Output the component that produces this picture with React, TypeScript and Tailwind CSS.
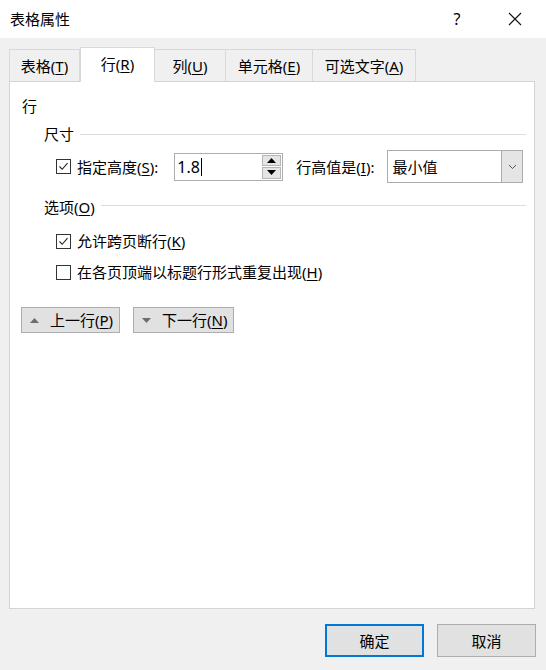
import React from "react";

const U = ({ c }: { c: string }) => <span className="underline underline-offset-2">{c}</span>;

const Check = ({ checked }: { checked: boolean }) => (
  <div className="w-[15px] h-[15px] border border-[#333333] bg-white flex items-center justify-center shrink-0">
    {checked && (
      <svg width="11" height="11" viewBox="0 0 11 11">
        <path d="M1.5 5.5 L4.2 8.3 L9.5 2.2" fill="none" stroke="#222" strokeWidth="1.1" />
      </svg>
    )}
  </div>
);

const Tri = ({ up, color = "#000" }: { up: boolean; color?: string }) => (
  <svg width="9" height="5" viewBox="0 0 9 5">
    {up ? <path d="M0 5 L4.5 0 L9 5 Z" fill={color} /> : <path d="M0 0 L4.5 5 L9 0 Z" fill={color} />}
  </svg>
);

export default function App() {
  return (
    <div className="w-[546px] h-[670px] flex flex-col bg-[#f0f0f0] text-[15px] leading-[20px] text-black font-['Noto_Sans','Noto_Sans_CJK_SC',sans-serif] overflow-hidden">
      {/* title bar */}
      <div className="h-[38px] bg-white flex items-center shrink-0">
        <div className="pl-[10px] flex-1">表格属性</div>
        <div className="w-[20px] text-center mr-[38px] text-[16px]">?</div>
        <div className="w-[20px] mr-[21px] flex justify-center">
          <svg width="14" height="14" viewBox="0 0 14 14">
            <path d="M1 1 L13 13 M13 1 L1 13" stroke="#111" strokeWidth="1.1" />
          </svg>
        </div>
      </div>

      {/* tabs */}
      <div className="flex items-end pl-[9px] mt-[9px] h-[34px] shrink-0 relative z-10">
        <div className="w-[71px] h-[32px] border border-b-0 border-[#d9d9d9] flex items-center justify-center">
          表格(<U c="T" />)
        </div>
        <div className="w-[75px] h-[35px] mb-[-1px] bg-white border border-b-0 border-[#d9d9d9] flex items-center justify-center pb-[2px]">
          行(<U c="R" />)
        </div>
        <div className="w-[71px] h-[32px] border border-l-0 border-b-0 border-[#d9d9d9] flex items-center justify-center">
          列(<U c="U" />)
        </div>
        <div className="w-[87px] h-[32px] border border-l-0 border-b-0 border-[#d9d9d9] flex items-center justify-center">
          单元格(<U c="E" />)
        </div>
        <div className="w-[103px] h-[32px] border border-l-0 border-b-0 border-[#d9d9d9] flex items-center justify-center">
          可选文字(<U c="A" />)
        </div>
      </div>

      {/* panel */}
      <div className="ml-[9px] mr-[11px] h-[528px] bg-white border border-[#d4d4d4] shrink-0 flex flex-col">
        <div className="pl-[12px] mt-[14px]">行</div>

        <div className="flex items-center pl-[34px] pr-[8px] mt-[8px] h-[20px]">
          <span>尺寸</span>
          <div className="flex-1 h-px bg-[#dcdcdc] ml-[6px]" />
        </div>

        <div className="flex items-center h-[33px] mt-[6px] pl-[46px]">
          <Check checked />
          <span className="ml-[6px]">指定高度(<U c="S" />):</span>
          <div className="ml-[16px] w-[109px] h-[28px] border border-[#abadb3] flex items-center relative">
            <span className="pl-[2px] text-[16px]">1.8</span>
            <span className="w-px h-[18px] bg-black ml-[1px]" />
            <div className="absolute right-[1px] top-[1px] bottom-[1px] w-[19px] flex flex-col gap-[1px]">
              <div className="flex-1 bg-[#e5e5e5] border border-[#b5b5b5] flex items-center justify-center">
                <Tri up />
              </div>
              <div className="flex-1 bg-[#e5e5e5] border border-[#b5b5b5] flex items-center justify-center">
                <Tri up={false} />
              </div>
            </div>
          </div>
          <span className="ml-[13px]">行高值是(<U c="I" />):</span>
          <div className="ml-[13px] w-[136px] h-[33px] border border-[#acacac] flex items-center bg-white">
            <span className="pl-[4px] flex-1">最小值</span>
            <div className="w-[21px] h-full bg-[#e5e5e5] border-l border-[#acacac] flex items-center justify-center">
              <svg width="9" height="6" viewBox="0 0 9 6">
                <path d="M1 1 L4.5 4.5 L8 1" fill="none" stroke="#555" strokeWidth="1" />
              </svg>
            </div>
          </div>
        </div>

        <div className="flex items-center pl-[34px] pr-[8px] mt-[14px] h-[20px]">
          <span>选项(<U c="O" />)</span>
          <div className="flex-1 h-px bg-[#dcdcdc] ml-[6px] -mt-[3px]" />
        </div>

        <div className="flex items-center pl-[46px] mt-[14px] h-[20px]">
          <Check checked />
          <span className="ml-[6px]">允许跨页断行(<U c="K" />)</span>
        </div>
        <div className="flex items-center pl-[46px] mt-[11px] h-[20px]">
          <Check checked={false} />
          <span className="ml-[6px]">在各页顶端以标题行形式重复出现(<U c="H" />)</span>
        </div>

        <div className="flex pl-[11px] mt-[25px] gap-[13px]">
          <div className="w-[99px] h-[26px] bg-[#e1e1e1] border border-[#adadad] flex items-center pl-[8px]">
            <Tri up color="#6d6d6d" />
            <span className="ml-[11px]">上一行(<U c="P" />)</span>
          </div>
          <div className="w-[101px] h-[26px] bg-[#e1e1e1] border border-[#adadad] flex items-center pl-[8px]">
            <Tri up={false} color="#6d6d6d" />
            <span className="ml-[11px]">下一行(<U c="N" />)</span>
          </div>
        </div>
      </div>

      {/* footer */}
      <div className="flex justify-end pr-[10px] mt-[15px] gap-[13px]">
        <div className="w-[99px] h-[33px] bg-[#e1e1e1] border-2 border-[#0078d7] flex items-center justify-center">
          确定
        </div>
        <div className="w-[99px] h-[33px] bg-[#e1e1e1] border border-[#adadad] flex items-center justify-center">
          取消
        </div>
      </div>
    </div>
  );
}
